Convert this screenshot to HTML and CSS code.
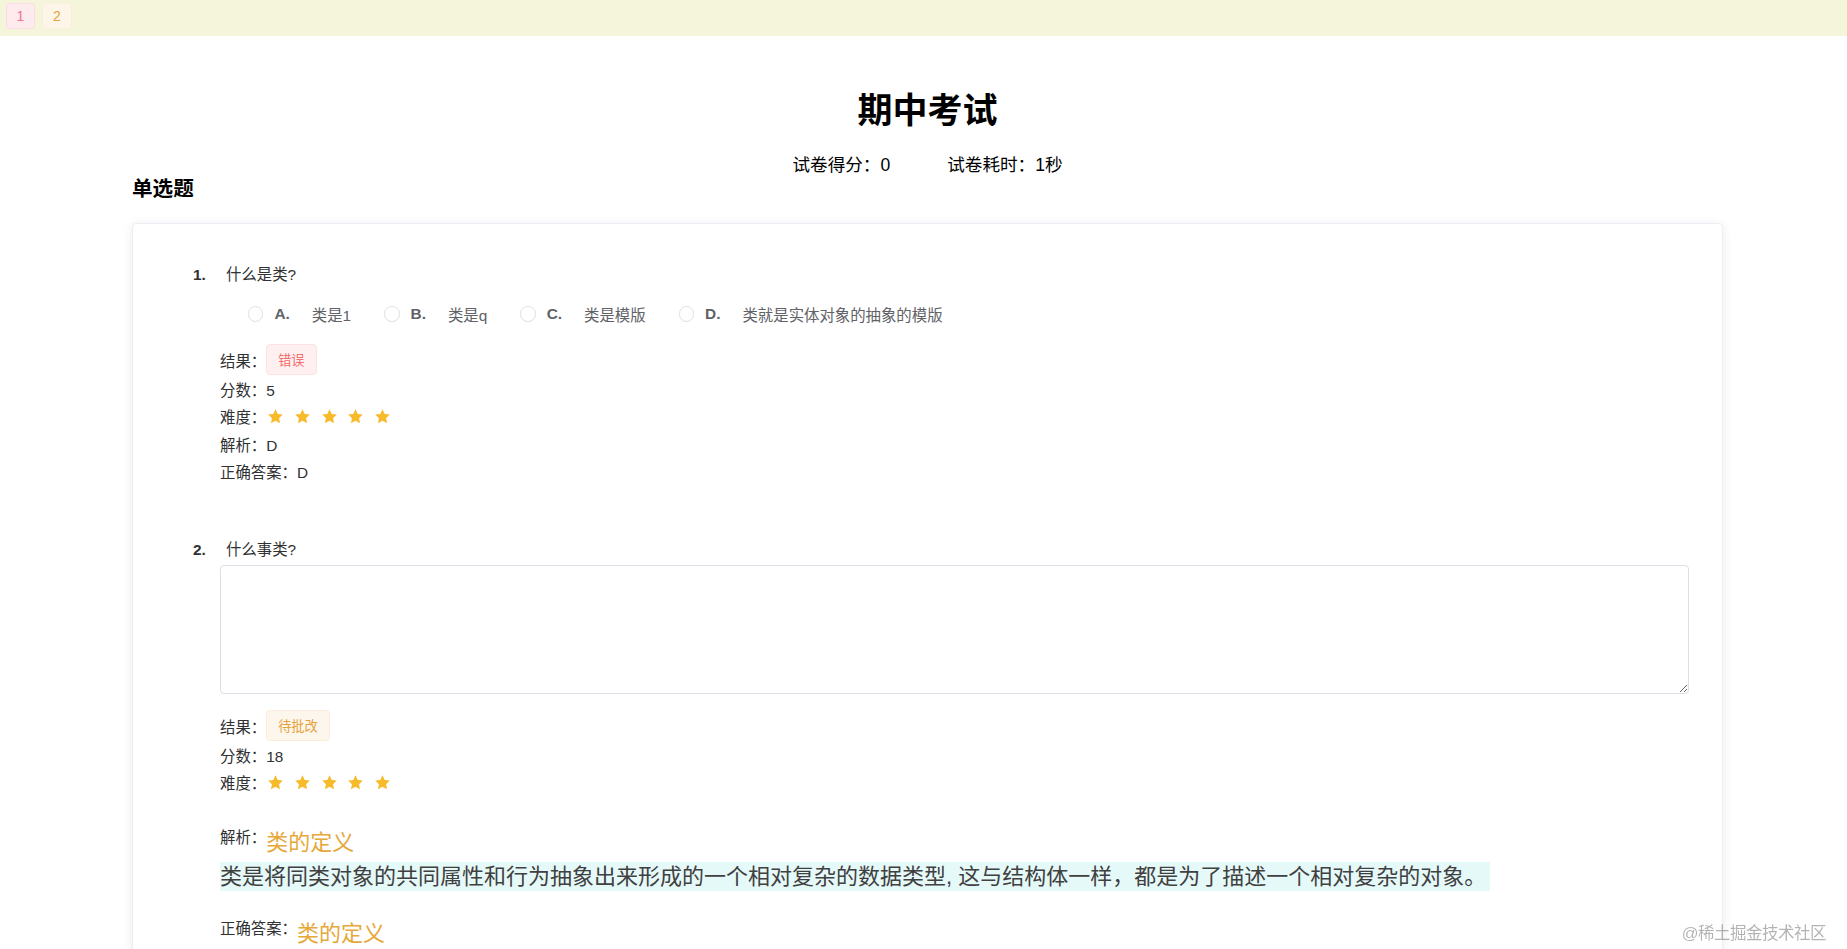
FILE: index.html
```html
<!DOCTYPE html>
<html lang="zh-CN">
<head>
<meta charset="utf-8">
<title>期中考试</title>
<link rel="stylesheet" href="styles.css">
</head>
<body>
<div class="topbar">
  <span class="pg pg-1">1</span>
  <span class="pg pg-2">2</span>
</div>

<h1 class="title">期中考试</h1>
<div class="summary">
  <span>试卷得分：0</span>
  <span>试卷耗时：1秒</span>
</div>
<h3 class="section">单选题</h3>

<div class="card">
  <div class="question">
    <div class="q-title"><span class="q-no">1.</span><span class="q-text">什么是类?</span></div>
    <div class="options">
      <label class="opt"><span class="radio"></span><span class="letter">A.</span><span class="opt-text">类是1</span></label>
      <label class="opt"><span class="radio"></span><span class="letter">B.</span><span class="opt-text">类是q</span></label>
      <label class="opt"><span class="radio"></span><span class="letter">C.</span><span class="opt-text">类是模版</span></label>
      <label class="opt"><span class="radio"></span><span class="letter">D.</span><span class="opt-text">类就是实体对象的抽象的模版</span></label>
    </div>
    <div class="info">
      <div class="row row-tag">结果：<span class="tag tag-danger">错误</span></div>
      <div class="row">分数：5</div>
      <div class="row">难度：<span class="stars">
        <svg class="star" viewBox="0 0 24 24"><path d="M12 1.8l3.1 6.6 7.2.9-5.3 5 1.4 7.1L12 17.9l-6.4 3.5L7 14.3l-5.3-5 7.2-.9z"/></svg>
        <svg class="star" viewBox="0 0 24 24"><path d="M12 1.8l3.1 6.6 7.2.9-5.3 5 1.4 7.1L12 17.9l-6.4 3.5L7 14.3l-5.3-5 7.2-.9z"/></svg>
        <svg class="star" viewBox="0 0 24 24"><path d="M12 1.8l3.1 6.6 7.2.9-5.3 5 1.4 7.1L12 17.9l-6.4 3.5L7 14.3l-5.3-5 7.2-.9z"/></svg>
        <svg class="star" viewBox="0 0 24 24"><path d="M12 1.8l3.1 6.6 7.2.9-5.3 5 1.4 7.1L12 17.9l-6.4 3.5L7 14.3l-5.3-5 7.2-.9z"/></svg>
        <svg class="star" viewBox="0 0 24 24"><path d="M12 1.8l3.1 6.6 7.2.9-5.3 5 1.4 7.1L12 17.9l-6.4 3.5L7 14.3l-5.3-5 7.2-.9z"/></svg>
      </span></div>
      <div class="row">解析：D</div>
      <div class="row">正确答案：D</div>
    </div>
  </div>

  <div class="question q2">
    <div class="q-title"><span class="q-no">2.</span><span class="q-text">什么事类?</span></div>
    <textarea class="answer"></textarea>
    <div class="info info-2">
      <div class="row row-tag">结果：<span class="tag tag-warning">待批改</span></div>
      <div class="row">分数：18</div>
      <div class="row">难度：<span class="stars">
        <svg class="star" viewBox="0 0 24 24"><path d="M12 1.8l3.1 6.6 7.2.9-5.3 5 1.4 7.1L12 17.9l-6.4 3.5L7 14.3l-5.3-5 7.2-.9z"/></svg>
        <svg class="star" viewBox="0 0 24 24"><path d="M12 1.8l3.1 6.6 7.2.9-5.3 5 1.4 7.1L12 17.9l-6.4 3.5L7 14.3l-5.3-5 7.2-.9z"/></svg>
        <svg class="star" viewBox="0 0 24 24"><path d="M12 1.8l3.1 6.6 7.2.9-5.3 5 1.4 7.1L12 17.9l-6.4 3.5L7 14.3l-5.3-5 7.2-.9z"/></svg>
        <svg class="star" viewBox="0 0 24 24"><path d="M12 1.8l3.1 6.6 7.2.9-5.3 5 1.4 7.1L12 17.9l-6.4 3.5L7 14.3l-5.3-5 7.2-.9z"/></svg>
        <svg class="star" viewBox="0 0 24 24"><path d="M12 1.8l3.1 6.6 7.2.9-5.3 5 1.4 7.1L12 17.9l-6.4 3.5L7 14.3l-5.3-5 7.2-.9z"/></svg>
      </span></div>
      <div class="rich-row"><span class="rich-label">解析：</span><span class="rich-head">类的定义</span></div>
      <p class="rich-p"><span class="hl">类是将同类对象的共同属性和行为抽象出来形成的一个相对复杂的数据类型, 这与结构体一样，都是为了描述一个相对复杂的对象。</span></p>
      <div class="rich-row rich-answer"><span class="rich-label">正确答案：</span><span class="rich-head">类的定义</span></div>
    </div>
  </div>
</div>

<div class="watermark">@稀土掘金技术社区</div>
</body>
</html>
```

FILE: styles.css
```css
html, body {
  margin: 0;
  padding: 0;
  background: #ffffff;
}
body {
  font-family: "Liberation Sans", "Noto Sans CJK SC", sans-serif;
  color: #303133;
  font-size: 15.4px;
  overflow: hidden;
  height: 949px;
}

.topbar {
  height: 36px;
  background: #f5f5dc;
  display: flex;
  align-items: flex-start;
  gap: 7px;
  padding: 3px 0 0 6px;
  box-sizing: border-box;
}
.pg {
  width: 29px;
  height: 26px;
  display: flex;
  align-items: center;
  justify-content: center;
  font-size: 14px;
  border-radius: 3px;
  box-sizing: border-box;
}
.pg-1 {
  background: #fdebee;
  color: #f0708e;
  border: 1px solid #f9dde3;
}
.pg-2 {
  width: 30px;
  background: #fdf6e8;
  color: #e6a23c;
  border: 1px solid #f8f0dc;
}

.title {
  margin: 53px 0 0 0;
  padding-left: 8px;
  text-align: center;
  font-size: 35px;
  line-height: 44px;
  font-weight: bold;
  color: #000;
}
.summary {
  margin-top: 20px;
  padding-left: 8px;
  display: flex;
  justify-content: center;
  gap: 57px;
  font-size: 17.6px;
  line-height: 24px;
  color: #000;
}
.section {
  margin: 0 0 0 132px;
  font-size: 20.6px;
  line-height: 24px;
  font-weight: bold;
  color: #000;
}

.card {
  margin: 22px 0 0 132px;
  width: 1591px;
  min-height: 900px;
  box-sizing: border-box;
  border: 1px solid #ebeef5;
  border-radius: 4px;
  box-shadow: 0 2px 12px rgba(0, 0, 0, 0.08);
  padding: 40px 33px 40px 60px;
  background: #fff;
}

.q-title {
  display: flex;
  align-items: center;
  line-height: 22px;
  height: 22px;
}
.q-no {
  width: 33px;
  font-weight: bold;
  font-size: 15.4px;
  color: #303133;
}
.q-text {
  font-size: 15.4px;
  color: #303133;
}

.options {
  margin: 17px 0 0 55px;
  display: flex;
  align-items: center;
  height: 22px;
}
.opt {
  display: flex;
  align-items: center;
  margin-right: 33px;
  color: #606266;
  font-size: 15.4px;
}
.radio {
  width: 15.4px;
  height: 15.4px;
  box-sizing: border-box;
  border: 1px solid #dcdfe6;
  border-radius: 50%;
  background: #fff;
  margin-right: 11px;
}
.letter {
  font-weight: bold;
  font-size: 15.4px;
  margin-right: 22px;
}

.info {
  margin: 19px 0 0 27px;
  font-size: 15.4px;
  color: #303133;
}
.row {
  height: 27.5px;
  display: flex;
  align-items: center;
}
.row-tag {
  height: 31px;
}
.tag {
  height: 30.8px;
  box-sizing: border-box;
  padding: 0 11px;
  display: inline-flex;
  align-items: center;
  font-size: 13.2px;
  border-radius: 4px;
  border: 1px solid;
}
.tag-danger {
  background: #fef0f0;
  border-color: #fde2e2;
  color: #f56c6c;
}
.tag-warning {
  background: #fdf6ec;
  border-color: #faecd8;
  color: #e6a23c;
}
.stars {
  display: inline-flex;
  align-items: center;
  margin-left: 1px;
}
.star {
  width: 17px;
  height: 17px;
  fill: #f7ba2a;
  margin-right: 9.7px;
}

.q2 {
  margin-top: 54px;
}
.answer {
  display: block;
  margin: 4px 0 0 27px;
  width: 1469px;
  height: 129px;
  box-sizing: border-box;
  border: 1px solid #dcdfe6;
  border-radius: 4px;
  resize: vertical;
  font-family: inherit;
  background: #fff;
}
.info-2 {
  margin-top: 16px;
}
.rich-row {
  margin-top: 31px;
  display: flex;
  align-items: flex-start;
}
.rich-label {
  font-size: 15.4px;
  line-height: 22px;
  color: #303133;
}
.rich-head {
  font-size: 22px;
  line-height: 32px;
  color: #e6a83a;
}
.rich-p {
  margin: 3px 0 0 0;
  line-height: 29px;
}
.hl {
  display: inline-block;
  background: #e6f9f9;
  font-size: 22px;
  color: #404040;
  padding-right: 4px;
}
.rich-answer {
  margin-top: 25px;
}

.watermark {
  position: fixed;
  right: 21px;
  bottom: 5px;
  font-size: 16.5px;
  color: rgba(0, 0, 0, 0.3);
  letter-spacing: -0.5px;
}
```
